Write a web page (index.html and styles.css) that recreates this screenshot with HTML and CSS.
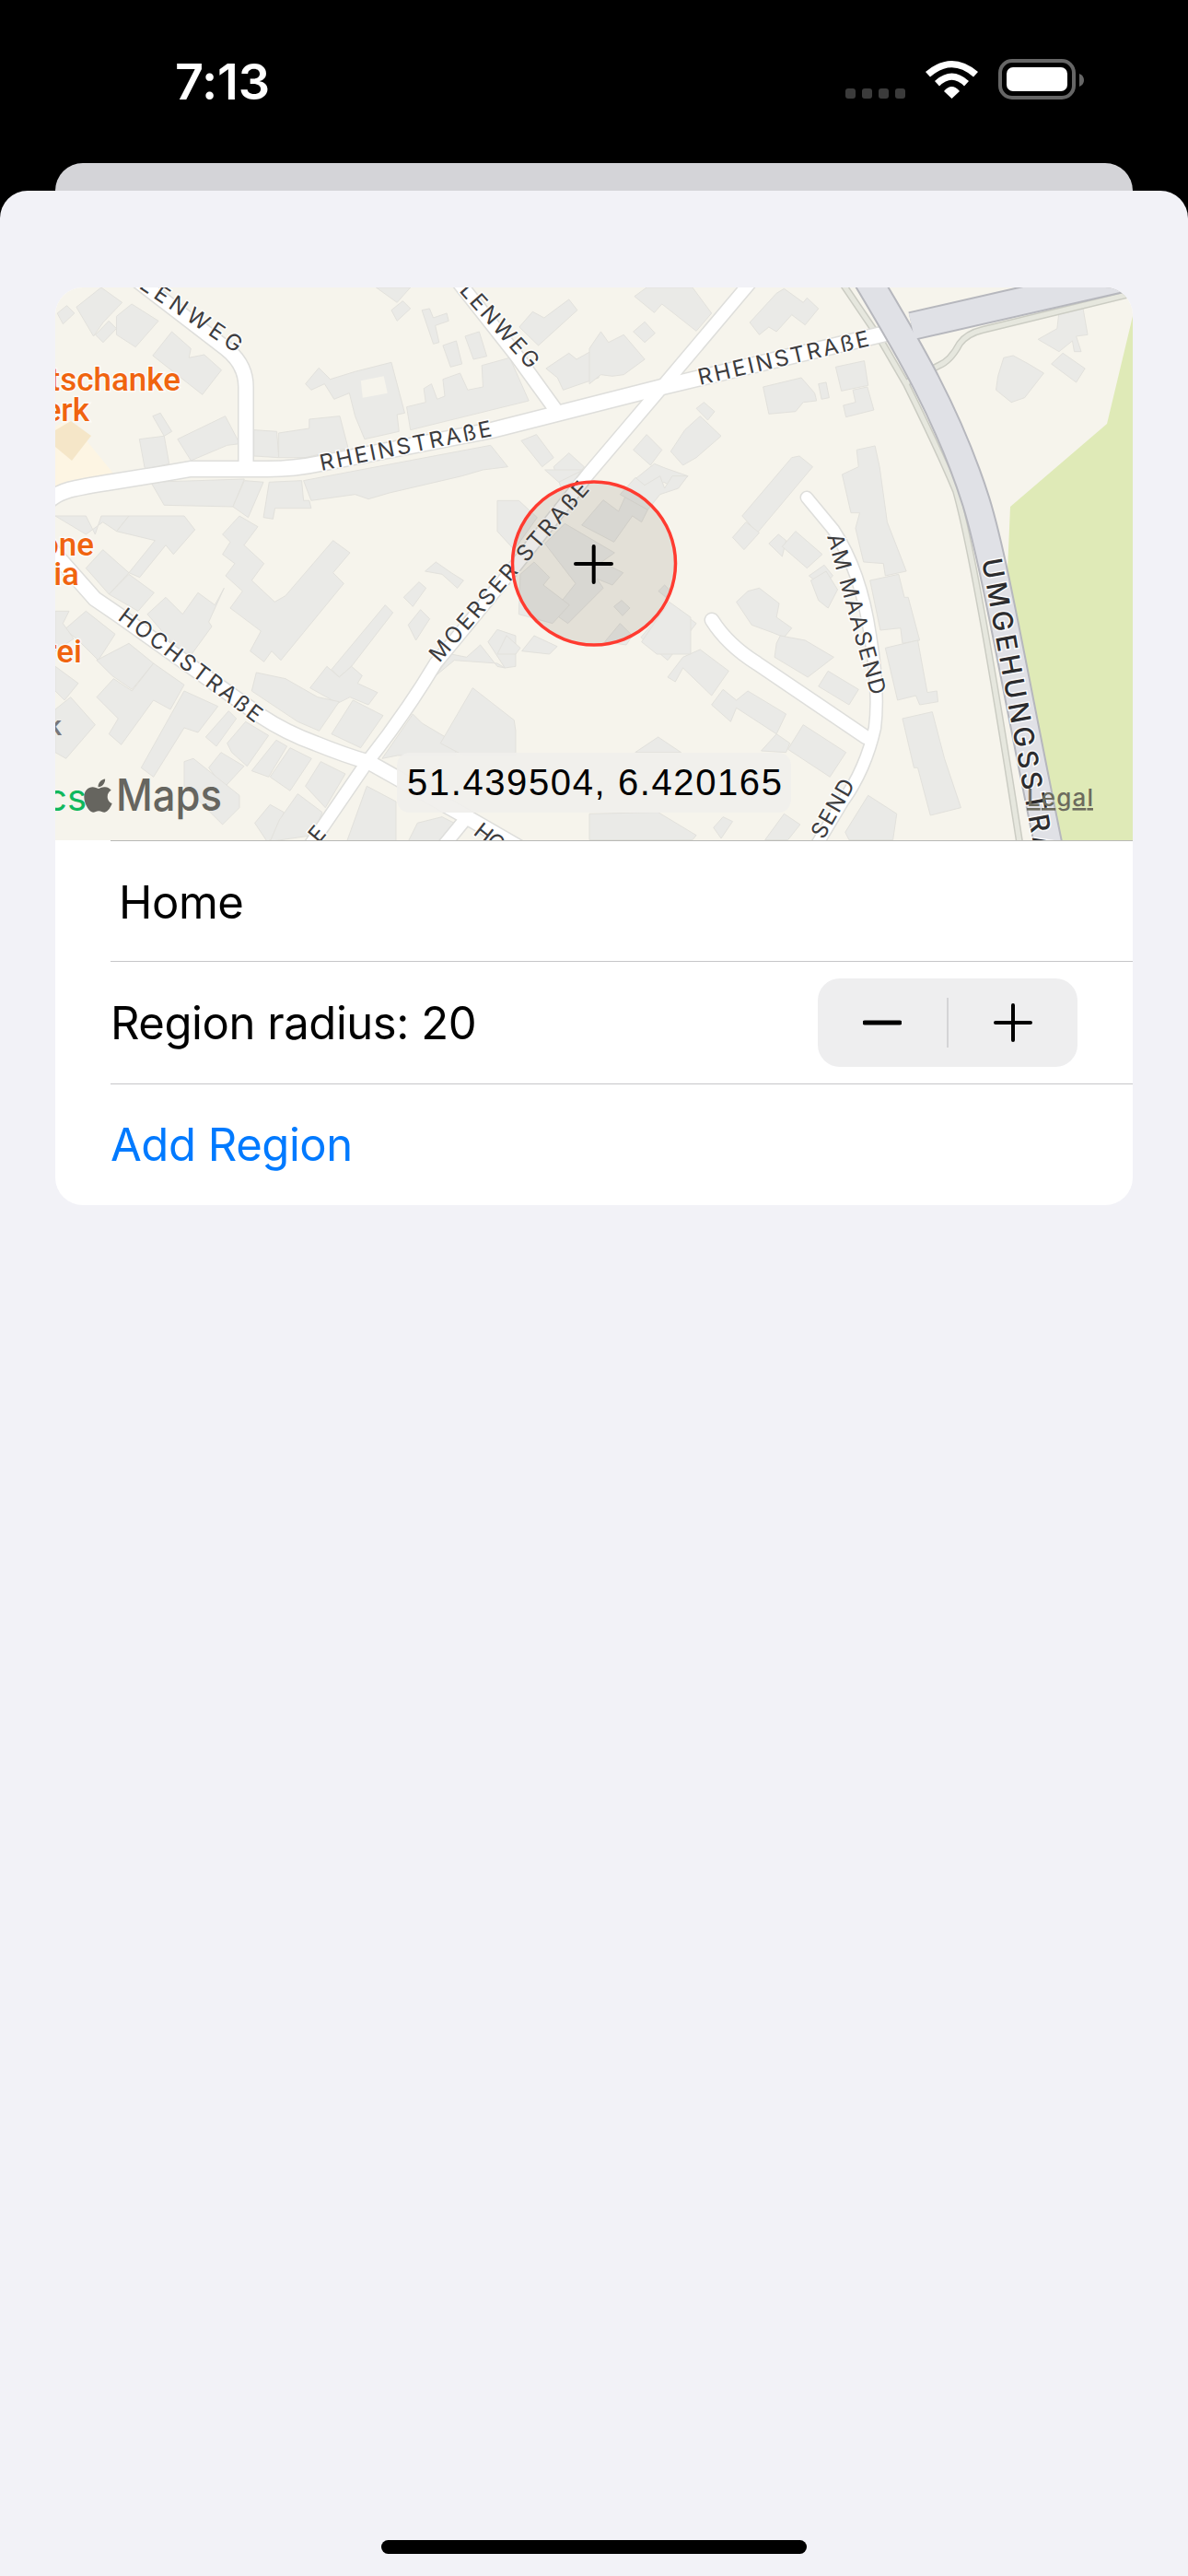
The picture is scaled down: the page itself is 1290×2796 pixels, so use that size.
FILE: index.html
```html
<!DOCTYPE html>
<html lang="en">
<head>
<meta charset="utf-8">
<title>Add Region</title>
<link rel="stylesheet" href="styles.css">
</head>
<body>
<div class="screen">
  <header class="status">
    <span class="time">7:13</span>
    <div class="status-icons">
      <div class="signal"><i></i><i></i><i></i><i></i></div>
      <svg class="wifi" width="57" height="41" viewBox="0 0 57 41">
        <path d="M0 12Q28.5 -12 57 12L52 17.5Q28.5 -3 5 17.5Z"/>
        <path d="M10 22Q28.5 5 47 22L42 27.5Q28.5 14 15 27.5Z"/>
        <path d="M20 33Q28.5 23 37 33L28.5 41Z"/>
      </svg>
      <svg class="battery" width="94" height="44" viewBox="0 0 94 44">
        <rect class="bat-frame" x="2" y="2" width="80" height="40" rx="13"/>
        <rect class="bat-fill" x="9" y="9" width="66" height="26" rx="7"/>
        <path class="bat-nub" d="M88 16Q93 18 93 23Q93 28 88 30Z"/>
      </svg>
    </div>
  </header>
  <div class="sheet-back"></div>
  <main class="sheet">
    <section class="card">
      <div class="map">
        <svg class="map-svg" width="1170" height="600" viewBox="60 312 1170 600">
          <rect class="land" x="60" y="312" width="1170" height="600"/>
          <polygon class="park" points="1230,343 1202,460 1097,550 1094,620 1152,912 1230,912"/>
          <polygon class="poi-glow" points="60,463 75,455 124,515 60,535"/>
          <g class="bld" transform="translate(0 300) scale(.4146 .3333)">
            <polygon points="200,100 265,36 320,85 270,150 245,195"/>
            <polygon points="150,120 175,95 195,120 165,155"/>
            <polygon points="305,130 345,90 415,145 355,230 305,190"/>
            <polygon points="250,190 285,145 305,170 270,215"/>
            <polygon points="400,258 450,180 500,235 495,265 535,255 580,305 530,385"/>
            <polygon points="465,530 590,455 628,545 595,550 500,600"/>
            <polygon points="365,530 430,520 443,610 380,630"/>
            <polygon points="400,455 420,445 450,505 430,520"/>
            <polygon points="665,500 725,505 730,590 665,585"/>
            <polygon points="730,510 810,495 810,465 890,455 912,560 870,570 800,590 730,590"/>
            <polygon points="800,350 835,298 865,335 930,310 1025,280 1060,445 1040,450 1045,505 955,530 930,455 915,380 875,400 850,350 815,370"/>
            <polygon class="yard" points="945,340 1005,325 1015,380 950,395"/>
            <polygon points="1065,425 1115,410 1110,365 1130,350 1145,400 1165,390 1160,335 1205,315 1225,370 1265,360 1262,290 1335,265 1385,405 1075,500"/>
            <polygon points="1105,110 1125,105 1135,135 1170,120 1175,145 1140,160 1150,215 1135,220"/>
            <polygon points="1160,225 1195,210 1210,285 1180,295"/>
            <polygon points="1218,195 1255,180 1275,260 1240,270"/>
            <polygon points="1360,165 1395,115 1425,135 1490,75 1512,110 1410,225"/>
            <polygon points="1430,300 1490,250 1510,270 1568,230 1568,330 1475,370 1460,330"/>
            <polygon points="985,36 1075,36 1040,85"/>
            <polygon points="1025,110 1055,80 1075,105 1040,145"/>
            <polygon points="395,670 640,660 610,750 430,745"/>
            <polygon points="640,665 690,670 650,785 610,750"/>
            <polygon points="705,670 790,665 795,730 810,730 815,755 720,755 715,790 690,785"/>
            <polygon points="795,665 1285,550 1330,620 1265,630 1210,650 1020,705 965,725 930,710 815,730"/>
            <polygon points="1365,535 1405,515 1450,590 1420,620"/>
            <polygon points="1450,620 1490,575 1530,620 1500,670 1470,690"/>
          </g>
          <g class="bld" transform="translate(640 300) scale(.4146 .3333)">
            <polygon points="118,65 150,36 270,36 320,120 280,178 190,90 170,118"/>
            <polygon points="420,150 490,55 510,40 560,85 570,70 600,105 565,158 530,125 490,180 470,165 445,190"/>
            <polygon points="115,180 145,148 172,185 145,215"/>
            <polygon points="0,235 30,180 50,215 90,190 145,270 90,320 60,325 30,320 0,350"/>
            <polygon points="455,360 555,330 590,380 595,405 560,410 540,440 470,448"/>
            <polygon points="600,350 620,345 628,395 608,400"/>
            <polygon points="645,295 720,275 730,355 660,373"/>
            <polygon points="690,370 728,360 745,435 672,458 665,420 697,410"/>
            <polygon points="1230,115 1293,105 1305,190 1275,195 1288,245 1270,245 1265,210 1230,245 1175,205 1225,170"/>
            <polygon points="1210,285 1240,250 1298,300 1275,345"/>
            <polygon points="1070,325 1085,265 1110,258 1150,285 1190,315 1140,395 1105,410 1065,370"/>
            <polygon points="280,430 300,410 328,440 310,468"/>
            <polygon points="250,500 290,455 345,520 280,590 245,615 213,570"/>
            <polygon points="115,565 150,515 190,565 160,615"/>
            <polygon points="110,670 170,610 200,625 258,650 228,692 195,670 140,730"/>
            <polygon points="400,780 530,590 550,585 585,620 440,835"/>
            <polygon points="375,850 410,800 445,835 405,890"/>
            <polygon points="470,870 495,840 515,860 505,912"/>
            <polygon points="505,880 540,830 610,905 570,950"/>
            <polygon points="575,975 615,940 638,975 625,990 590,990"/>
            <polygon points="700,565 748,552 760,620 780,800 830,960 775,975 770,935 718,930 697,820 708,770 685,770 662,645 705,620"/>
          </g>
          <g class="bld" transform="translate(640 620) scale(.4146 .3333)">
            <polygon points="735,30 810,10 825,85 835,85 865,225 820,235 815,185 762,192"/>
            <polygon points="775,250 860,225 885,395 910,390 913,425 865,435 855,405 807,420"/>
            <polygon points="820,480 898,458 930,610 973,770 893,795 860,640 850,640"/>
            <polygon points="385,100 415,65 445,55 497,105 490,150 530,185 510,215 480,200 425,175"/>
            <polygon points="490,235 500,210 565,225 640,280 572,345 485,280"/>
            <polygon points="600,375 625,325 705,385 680,435"/>
            <polygon points="580,30 620,0 650,60 625,120 600,95"/>
            <polygon points="205,345 245,280 290,255 365,325 320,405 245,315 225,360"/>
            <polygon points="135,215 210,105 280,170 205,290"/>
            <polygon points="320,435 350,385 385,420 415,390 515,465 490,530 385,445 370,490"/>
            <polygon points="450,585 490,530 525,560 515,590"/>
            <polygon points="520,580 560,500 672,590 630,670"/>
            <polygon points="0,790 180,785 280,860 270,875 0,875"/>
            <polygon points="325,835 350,800 375,815 345,870"/>
            <polygon points="460,875 510,790 552,825 520,875"/>
            <polygon points="670,850 730,730 805,790 795,875 680,875"/>
            <polygon points="120,590 180,540 240,590"/>
          </g>
          <g class="bld" transform="translate(60 560) scale(.3333)">
            <polygon points="0,0 100,0 130,60 150,0 240,0 200,50 155,20 100,60"/>
            <polygon points="200,50 240,0 420,0 455,45 385,125 360,95 275,200 240,185 325,80"/>
            <polygon points="100,170 155,110 240,185 175,255"/>
            <polygon points="175,255 240,190 322,250 270,310"/>
            <polygon points="300,320 360,265 415,320 465,250 520,290 550,235 500,345 510,360 430,470"/>
            <polygon points="545,60 600,0 660,35 615,95 680,155 640,210 715,280 750,260 905,80 960,120 905,185 940,220 735,470 705,440 680,475 635,440 670,375 570,300 610,245 555,195 585,155 545,125 570,85"/>
            <polygon points="900,500 1075,290 1100,315 965,490 925,525"/>
            <polygon points="830,560 885,490 925,525 965,490 1000,520 985,545 1050,575 1020,615 960,590 920,610"/>
            <polygon points="655,510 750,530 855,590 925,605 860,700 790,670 640,570"/>
            <polygon points="900,710 970,600 1068,650 995,755"/>
            <polygon points="30,370 100,310 195,385 140,470 70,400"/>
            <polygon points="135,470 240,415 320,480 250,565 185,520"/>
            <polygon points="0,310 45,310 25,350 60,400 0,440"/>
            <polygon points="0,490 75,545 30,600 0,570"/>
            <polygon points="0,630 50,590 130,680 35,790 0,770"/>
            <polygon points="135,590 190,530 250,570 320,480 420,550 375,630 320,600 215,745 175,710 205,660"/>
            <polygon points="280,820 420,570 530,620 465,705 420,690 320,850"/>
            <polygon points="490,720 565,635 590,660 525,750"/>
            <polygon points="560,740 620,670 695,715 625,815 575,770"/>
            <polygon points="500,820 540,770 615,815 550,885"/>
            <polygon points="640,830 720,730 755,750 695,850"/>
            <polygon points="700,850 765,755 835,790 765,895"/>
            <polygon points="815,880 865,800 945,840 880,950"/>
            <polygon points="420,800 450,790 600,910 600,950 545,1005 420,880"/>
            <polygon points="650,1000 700,940 745,965 710,1050 690,1060"/>
            <polygon points="730,990 790,905 870,965 840,1040 700,1060"/>
            <polygon points="950,1060 1015,880 1110,930 1110,1060"/>
            <polygon points="1180,1000 1260,980 1300,1000 1260,1060 1150,1060"/>
            <polygon points="1065,790 1165,645 1195,675 1305,740 1305,780 1115,780"/>
            <polygon points="1255,740 1360,560 1495,665 1500,700 1500,780 1330,780"/>
            <polygon points="1135,265 1185,215 1208,235 1165,295"/>
            <polygon points="1150,355 1190,305 1220,335 1175,405"/>
            <polygon points="1205,180 1240,150 1290,185 1330,210 1310,235 1260,190"/>
            <polygon points="1240,520 1290,450 1340,460 1385,420 1440,490 1465,495 1440,480 1300,470"/>
            <polygon points="1410,410 1440,370 1500,390 1500,490 1465,495"/>
          </g>
          <g class="bld" transform="translate(540 510) scale(.3333)">
            <polygon points="275,180 345,98 395,135 420,80 490,130 470,170 440,150 380,235"/>
            <polygon points="155,240 220,175 382,270 340,300 410,335 375,375 325,355 345,385 230,500 180,465 255,370"/>
            <polygon points="75,340 120,300 170,350 150,375 235,440 180,500 70,470"/>
            <polygon points="380,445 405,425 432,450 408,475"/>
            <polygon points="525,395 545,375 565,395 550,415"/>
            <polygon points="350,560 400,500 440,540 420,570"/>
            <polygon points="470,560 560,430 630,480 630,600 520,600"/>
            <polygon points="0,100 70,100 130,155 55,260 0,200"/>
            <polygon points="155,0 280,0 200,40"/>
            <polygon points="400,80 450,25 480,50 530,20 545,60 570,20 620,20 590,60 530,80 490,130"/>
            <polygon points="0,600 30,540 75,580 60,600"/>
            <polygon points="80,590 120,540 195,575 170,600"/>
          </g>
          <polygon class="poi-bld" points="60,467 77,457 99,473 78,500 60,485"/>
          <g class="svc">
            <path class="svc-edge" d="M913 305L955 367L984 417Q1020 490 1038 533Q1060 610 1108 920"/>
            <path class="svc-edge" d="M985 415L1019 397Q1032 392 1042 373Q1050 362 1067 358L1240 316"/>
            <path class="svc-core" d="M913 305L955 367L984 417Q1020 490 1038 533Q1060 610 1108 920"/>
            <path class="svc-core" d="M985 415L1019 397Q1032 392 1042 373Q1050 362 1067 358L1240 316"/>
          </g>
          <g class="roads">
            <path class="case w16" d="M50 546C70 526 90 530 207 509L290 509Q320 509 348 503L534 467L719 420L970 360"/>
            <path class="case w13" d="M816 305L719 420L640 513L555 620L473 720Q440 775 398 828L335 920"/>
            <path class="case w15" d="M50 590L103 650L128 667L283 777Q310 795 343 807Q375 820 400 827L507 887L590 935"/>
            <path class="case w13" d="M507 887L480 920"/>
            <path class="case w15" d="M150 305L245 378Q267 395 267 420L267 505"/>
            <path class="case w14" d="M497 305L560 385L605 447"/>
            <path class="case w12 cap" d="M876 540L905 575Q935 620 945 690Q955 750 950 790Q940 835 915 870L885 920"/>
            <path class="case w14 cap" d="M773 673Q790 700 822 720L940 800"/>
            <path class="core w16" d="M50 546C70 526 90 530 207 509L290 509Q320 509 348 503L534 467L719 420L970 360"/>
            <path class="core w13" d="M816 305L719 420L640 513L555 620L473 720Q440 775 398 828L335 920"/>
            <path class="core w15" d="M50 590L103 650L128 667L283 777Q310 795 343 807Q375 820 400 827L507 887L590 935"/>
            <path class="core w13" d="M507 887L480 920"/>
            <path class="core w15" d="M150 305L245 378Q267 395 267 420L267 505"/>
            <path class="core w14" d="M497 305L560 385L605 447"/>
            <path class="core w12 cap" d="M876 540L905 575Q935 620 945 690Q955 750 950 790Q940 835 915 870L885 920"/>
            <path class="core w14 cap" d="M773 673Q790 700 822 720L940 800"/>
          </g>
          <g class="hwy">
            <path class="hwy-edge" d="M990 354L1240 297"/>
            <path class="hwy-edge" d="M940 300C985 375 1030 450 1060 545C1080 610 1100 730 1140 925"/>
            <path class="hwy-core" d="M990 354L1240 297"/>
            <path class="hwy-core" d="M940 300C985 375 1030 450 1060 545C1080 610 1100 730 1140 925"/>
          </g>
          <g class="street">
            <text transform="translate(349 511) rotate(-11.5)" textLength="190">RHEINSTRAßE</text>
            <text transform="translate(760 418) rotate(-13)" textLength="190">RHEINSTRAßE</text>
            <text transform="translate(127 672) rotate(37)" textLength="188">HOCHSTRAßE</text>
            <text transform="translate(477 720) rotate(-49)" textLength="250">MOERSER STRAßE</text>
            <text transform="translate(150 312) rotate(34)" textLength="128">LENWEG</text>
            <text transform="translate(498 316) rotate(48)" textLength="115">LENWEG</text>
            <text transform="translate(898 582) rotate(74.5)" textLength="180">AM MAASEND</text>
            <text transform="translate(894 912) rotate(-60)" textLength="70">SEND</text>
            <text transform="translate(513 905) rotate(38)" textLength="52">HOC</text>
            <text transform="translate(346 916) rotate(-50)">E</text>
            <text class="street-major" transform="translate(1066 608) rotate(79.7)" textLength="372">UMGEHUNGSSTRAßE</text>
          </g>
          <g class="poi-orange">
            <text x="196" y="424">tschanke</text>
            <text x="97" y="457">erk</text>
            <text x="102" y="603">one</text>
            <text x="86" y="635">ia</text>
            <text x="89" y="719">rei</text>
          </g>
          <text class="poi-gray" x="67" y="798">k</text>
          <text class="poi-green" x="94" y="880">cs</text>
          <path class="maps-mark" transform="translate(91 843) scale(.0807)" d="M318.7 268.7c-.2-36.7 16.4-64.4 50-84.8-18.8-26.9-47.2-41.7-84.7-44.6-35.5-2.8-74.3 20.7-88.5 20.7-15 0-49.4-19.7-76.4-19.7C63.3 141.2 4 184.8 4 273.5q0 39.3 14.4 81.2c12.8 36.7 59 126.7 107.2 125.2 25.2-.6 43-17.9 75.8-17.9 31.8 0 48.3 17.9 76.4 17.9 48.6-.7 90.4-82.5 102.6-119.3-65.2-30.7-61.7-90-61.7-91.9zm-56.6-164.2c27.3-32.4 24.8-61.9 24-72.5-24.1 1.4-52 16.4-67.9 34.9-17.5 19.8-27.8 44.3-25.6 71.9 26.1 2 49.9-11.4 69.5-34.3z"/>
          <text class="maps-word" x="126" y="880" textLength="115" lengthAdjust="spacingAndGlyphs">Maps</text>
          <text class="legal" x="1115" y="875" textLength="72">Legal</text>
          <circle class="region" cx="645" cy="611.5" r="88.5"/>
          <path class="cross" d="M625 612H664M644.7 593V632"/>
        </svg>
        <div class="coords">51.439504, 6.420165</div>
      </div>
      <div class="row row-first"><span class="field">Home</span></div>
      <div class="row row-stepper">
        <span class="label">Region radius: 20</span>
        <div class="stepper">
          <button class="step" type="button" aria-label="Decrease">
            <svg width="42" height="6" viewBox="0 0 42 6"><path class="step-icon" d="M2 3H40"/></svg>
          </button>
          <span class="step-divider"></span>
          <button class="step" type="button" aria-label="Increase">
            <svg width="42" height="42" viewBox="0 0 42 42"><path class="step-icon thin" d="M2 21H40M21 2V40"/></svg>
          </button>
        </div>
      </div>
      <div class="row"><span class="label link">Add Region</span></div>
    </section>
    <div class="home-bar"></div>
  </main>
</div>
</body>
</html>
```
FILE: styles.css
```css
* { box-sizing: border-box; }
html, body { margin: 0; padding: 0; }
body { background: #000; font-family: "Inter", "Liberation Sans", sans-serif; }
.screen { width: 1290px; height: 2796px; display: flex; flex-direction: column; overflow: hidden; }

.status { height: 177px; flex: none; display: flex; align-items: flex-start; justify-content: space-between; padding: 57px 113px 0 190px; }
.time { color: #fff; font-size: 54px; font-weight: 600; line-height: 64px; letter-spacing: -.2px; }
.status-icons { display: flex; align-items: flex-start; margin-top: 7px; }
.signal { display: flex; gap: 7px; margin: 32px 22px 0 0; }
.signal i { width: 11px; height: 11px; border-radius: 3px; background: #3b3b3b; display: block; }
.wifi { fill: #fff; margin: 2px 22px 0 0; }
.battery { display: block; margin-top: 0; margin-right: -1px; }
.bat-frame { fill: none; stroke: #666; stroke-width: 4; }
.bat-fill { fill: #fff; }
.bat-nub { fill: #666; }

.sheet-back { height: 30px; flex: none; margin: 0 60px; background: #d4d4d8; border-radius: 30px 30px 0 0; }
.sheet { flex: 1; background: #f2f2f7; border-radius: 30px 30px 0 0; padding: 105px 60px 24px; display: flex; flex-direction: column; }

.card { background: #fff; border-radius: 30px; overflow: hidden; }
.map { position: relative; height: 600px; }
.map-svg { display: block; }
.land { fill: #f6f4ec; }
.park { fill: #dfeab7; }
.poi-glow { fill: #fdf5e3; }
.poi-bld { fill: #f5e6c8; }
.bld polygon { fill: #eaeae7; stroke: #e2e1dc; stroke-width: 1px; vector-effect: non-scaling-stroke; }
.bld .yard { fill: #f6f4ec; stroke: none; }

.roads path, .svc path, .hwy path { fill: none; }
.case { stroke: #dededb; }
.core { stroke: #fff; }
.cap { stroke-linecap: round; }
.case.w16 { stroke-width: 19px; } .core.w16 { stroke-width: 16px; }
.case.w15 { stroke-width: 18px; } .core.w15 { stroke-width: 15px; }
.case.w14 { stroke-width: 17px; } .core.w14 { stroke-width: 14px; }
.case.w13 { stroke-width: 16px; } .core.w13 { stroke-width: 13px; }
.case.w12 { stroke-width: 15px; } .core.w12 { stroke-width: 12px; }
.svc-edge { stroke: #cbccc3; stroke-width: 8px; }
.svc-core { stroke: #e6e7de; stroke-width: 5px; }
.hwy-edge { stroke: #b6b7bd; stroke-width: 32px; }
.hwy-core { stroke: #e0e1e6; stroke-width: 28px; }

.street text { font-family: "Inter", "Liberation Sans", sans-serif; font-size: 24px; font-weight: 400; fill: #3c3c3e; stroke: #fff; stroke-width: 3px; stroke-opacity: .85; paint-order: stroke; }
.street .street-major { font-size: 30px; font-weight: 500; fill: #2c2c2e; }
.poi-orange text { font-family: "Roboto", "Liberation Sans", sans-serif; font-size: 35px; font-weight: 500; fill: #f0640f; text-anchor: end; stroke: #fff; stroke-width: 3px; stroke-opacity: .7; paint-order: stroke; }
.poi-gray { font-family: "Roboto", sans-serif; font-size: 30px; font-weight: 500; fill: #77777a; text-anchor: end; }
.poi-green { font-family: "Inter", sans-serif; font-size: 40px; font-weight: 400; fill: #10b85c; text-anchor: end; }
.maps-mark { fill: #66655f; }
.maps-word { font-family: "Inter", sans-serif; font-size: 48px; font-weight: 500; fill: #66655f; }
.legal { font-family: "Inter", sans-serif; font-size: 26px; font-weight: 500; fill: #6c6b5e; text-decoration: underline; }
.region { fill: rgba(60, 50, 30, .1); stroke: #ff3b30; stroke-width: 3.5px; }
.cross { fill: none; stroke: #000; stroke-width: 4px; stroke-linecap: round; }

.coords { position: absolute; left: 371px; top: 505px; width: 428px; height: 65px; padding-left: 11px; border-radius: 14px; background: rgba(240, 239, 236, .94); color: #000; font-family: "Liberation Sans", sans-serif; font-size: 40px; letter-spacing: 1.6px; line-height: 65px; white-space: nowrap; }

.row { margin-left: 60px; height: 132px; display: flex; align-items: center; justify-content: space-between; border-top: 1px solid #c6c6c8; color: #000; font-size: 49px; letter-spacing: -.45px; }
.row-first { height: 131px; border-top-color: #b9b9b6; }
.row-stepper { height: 133px; padding-right: 60px; }
.field { padding-left: 9px; position: relative; top: 1px; }
.label { white-space: nowrap; }
.link { color: #007aff; }

.stepper { width: 282px; height: 96px; border-radius: 24px; background: #eeeeef; display: flex; align-items: center; }
.step { flex: 1; height: 100%; border: 0; padding: 0; background: none; display: flex; align-items: center; justify-content: center; }
.step svg { display: block; }
.step-divider { width: 2px; height: 54px; background: #d4d4d6; flex: none; }
.step-icon { fill: none; stroke: #000; stroke-width: 5px; stroke-linecap: round; }
.step-icon.thin { stroke-width: 4px; }

.home-bar { width: 462px; height: 15px; margin: auto 0 0 354px; border-radius: 8px; background: #000; }
```
